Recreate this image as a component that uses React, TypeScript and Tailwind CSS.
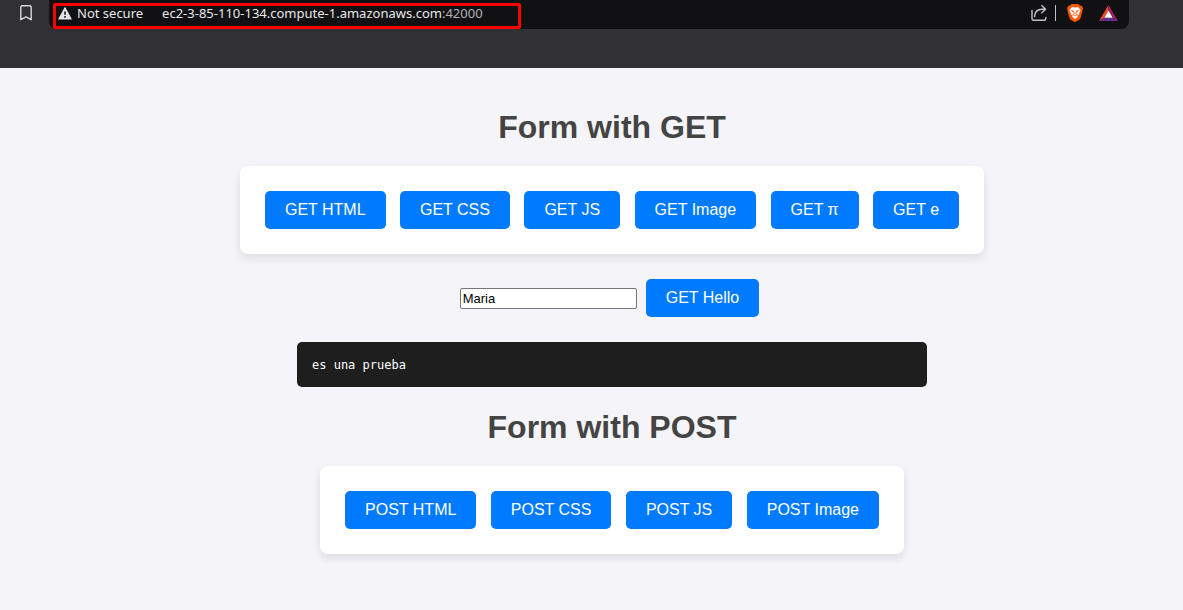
import { Fragment, useState } from "react";

const getActions = ["GET HTML", "GET CSS", "GET JS", "GET Image", "GET π", "GET e"];
const postActions = ["POST HTML", "POST CSS", "POST JS", "POST Image"];

function ActionButton({ label, submit = false }: { label: string; submit?: boolean }) {
  return (
    <button
      type={submit ? "submit" : "button"}
      className="m-[5px] h-[38px] cursor-pointer rounded-[5px] bg-[#007bff] px-5 text-base leading-[18px] text-white hover:bg-[#0056b3]"
    >
      {label}
    </button>
  );
}

function ActionCard({ actions }: { actions: string[] }) {
  return (
    <div className="rounded-lg bg-white p-5 text-center shadow-[0_4px_8px_rgba(0,0,0,0.1)]">
      {actions.map((label) => (
        <Fragment key={label}>
          <ActionButton label={label} />{" "}
        </Fragment>
      ))}
    </div>
  );
}

function BrowserBar() {
  return (
    <header className="flex h-[68px] items-start bg-[#313035] pr-[54px] font-['Noto_Sans','Open_Sans',sans-serif]">
      <button type="button" aria-label="Bookmark this page" className="mt-1 ml-[18px] flex h-[18px] w-4 items-center justify-center">
        <svg viewBox="0 0 16 18" className="h-[18px] w-4" fill="none" stroke="#d8d8da" strokeWidth="1.4" strokeLinejoin="round">
          <path d="M2.8 3.2Q2.8 1.7 4.3 1.7H11.7Q13.2 1.7 13.2 3.2V15.7L8 12.8L2.8 15.7Z" />
        </svg>
      </button>
      <div className="ml-[15px] flex h-[29px] grow items-start justify-between rounded-b-lg bg-[#111113] pr-[11px] pl-1">
        <div className="mt-[3px] flex h-[26px] w-[468px] items-center rounded-[2px] border-3 border-[#ff0000] pb-[6px] pl-[2px] text-[13px] leading-4 text-[#e8e8e8]">
          <button type="button" className="flex items-center gap-[5px]">
            <svg viewBox="0 0 14 13" className="h-[13px] w-3.5" aria-hidden="true">
              <path d="M7 .9L13.1 12H.9Z" fill="#e3e3e3" stroke="#e3e3e3" strokeWidth="1.2" strokeLinejoin="round" />
              <path d="M7 4.4V7.8M7 9.1V10.7" stroke="#111113" strokeWidth="1.5" />
            </svg>
            Not secure
          </button>
          <div
            role="textbox"
            aria-label="Address"
            contentEditable
            suppressContentEditableWarning
            spellCheck={false}
            className="ml-[19px] whitespace-nowrap outline-none"
          >
            ec2-3-85-110-134.compute-1.amazonaws.com<span className="text-[#b4b4b6]">:42000</span>
          </div>
        </div>
        <div className="mt-1 flex h-[18px] items-center">
          <button type="button" aria-label="Share">
            <svg viewBox="0 0 18 18" className="size-[18px]" fill="none" stroke="#c4c4c6" strokeWidth="1.4" strokeLinecap="round" strokeLinejoin="round">
              <path d="M2 6.5V14.8Q2 16.3 3.5 16.3H14.3Q15.8 16.3 15.8 14.8V13.5" />
              <path d="M4.6 12.6C4.8 7.8 7.5 5.2 12 5.2H15.4M11.8 1.6L15.6 5.2L11.8 8.8" />
            </svg>
          </button>
          <span className="ml-[7px] h-4 w-px bg-[#c0c0c2]" />
          <button type="button" aria-label="Brave Shields" className="ml-[10px]">
            <svg viewBox="0 0 18 18" className="size-[18px]" aria-hidden="true">
              <path d="M5.5 0H12.5L14 1.7L15.8 1.7L17 4.2L16.4 6L16.6 7L14.4 14.2Q14 15.3 13 16L9.8 17.8Q9 18.2 8.2 17.8L5 16Q4 15.3 3.6 14.2L1.4 7L1.6 6L1 4.2L2.2 1.7L4 1.7Z" fill="#ff5500" />
              <path d="M6 3L9 3.5L12 3L14.6 6L13.4 8.8L13.1 10.6L11.4 11.6L11.6 13L9 15L6.4 13L6.6 11.6L4.9 10.6L4.6 8.8L3.4 6Z" fill="#fff" />
              <path d="M5.3 6.4L7.8 7L7.2 8.2ZM12.7 6.4L10.2 7L10.8 8.2Z" fill="#ff5500" stroke="#ff5500" strokeWidth=".5" />
              <path d="M8.1 8V10L6.7 10.7L9 12L11.3 10.7L9.9 10V8" fill="none" stroke="#ff5500" strokeWidth=".8" />
            </svg>
          </button>
          <button type="button" aria-label="Brave Rewards" className="ml-[15px]">
            <svg viewBox="0 0 19 18" className="h-[18px] w-[19px]" aria-hidden="true">
              <path d="M9.5 1L0 17L5.4 13.8L9.5 6.6Z" fill="#ff4724" />
              <path d="M9.5 1L19 17L13.6 13.8L9.5 6.6Z" fill="#9e1f63" />
              <path d="M0 17H19L13.6 13.8H5.4Z" fill="#662d91" />
              <path d="M9.5 6.6L13.6 13.8H5.4Z" fill="#fff" />
            </svg>
          </button>
        </div>
      </div>
    </header>
  );
}

export default function App() {
  const [name, setName] = useState("Maria");

  return (
    <div className="flex min-h-screen flex-col bg-[#f4f4f9] font-['Liberation_Sans',Arial,sans-serif]">
      <BrowserBar />
      <main className="flex grow flex-col items-center pt-[41px] pb-10 pl-[41px]">
        <h1 className="mb-[21px] text-[32px] leading-9 font-bold text-[#444444]">Form with GET</h1>
        <ActionCard actions={getActions} />
        <form className="mt-5 flex items-center gap-1" onSubmit={(event) => event.preventDefault()}>
          <input
            type="text"
            aria-label="Name"
            value={name}
            onChange={(event) => setName(event.target.value)}
            className="h-[21px] w-[177px] rounded-[2px] border border-[#767676] bg-white px-[2px] text-[13px] leading-4 text-black"
          />
          <ActionButton label="GET Hello" submit />
        </form>
        <pre className="mt-5 w-[630px] max-w-full rounded-[5px] bg-[#1e1e1e] px-[15px] pt-4 pb-3.5 font-['DejaVu_Sans_Mono',monospace] text-xs leading-[15px] text-white">
          es una prueba
        </pre>
        <h1 className="mt-[22px] mb-[21px] text-[32px] leading-9 font-bold text-[#444444]">Form with POST</h1>
        <ActionCard actions={postActions} />
      </main>
    </div>
  );
}
